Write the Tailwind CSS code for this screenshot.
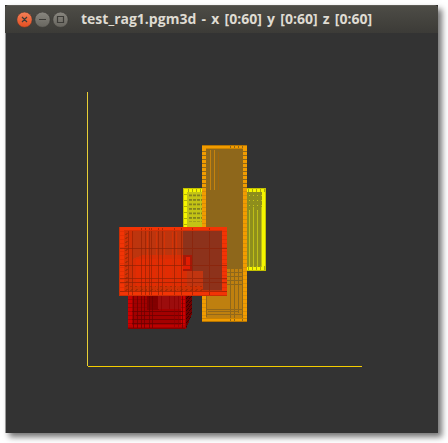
<!DOCTYPE html>
<html lang="en">
<head>
<meta charset="utf-8">
<title>test_rag1.pgm3d</title>
<script src="https://cdn.jsdelivr.net/npm/@tailwindcss/browser@4"></script>
</head>
<body class="bg-white w-[448px] h-[443px] overflow-hidden pt-[5px] pl-[5px]">
<main class="w-[433px] h-[428px] bg-[#333333] flex flex-col shadow-[4px_4px_6px_0px_rgba(0,0,0,0.55)]">
  <div class="bg-[#2b2a27] shrink-0">
  <header class="h-7 flex items-center pl-3 bg-linear-to-b from-[#4d4c46] to-[#3c3b37] border-t border-[#5d5b55] rounded-t-[4px]">
    <svg class="w-[52px] h-4 shrink-0" viewBox="0 0 52 16">
      <defs>
        <linearGradient id="close" x1="0" y1="0" x2="0" y2="1"><stop stop-color="#f68058"/><stop offset="1" stop-color="#e34e20"/></linearGradient>
        <linearGradient id="btn" x1="0" y1="0" x2="0" y2="1"><stop stop-color="#898780"/><stop offset="1" stop-color="#67655e"/></linearGradient>
      </defs>
      <g stroke="#34332f" stroke-width=".6">
        <circle cx="7.5" cy="7.7" r="7.7" fill="url(#close)"/>
        <circle cx="25.5" cy="7.7" r="7.7" fill="url(#btn)"/>
        <circle cx="43.5" cy="7.7" r="7.7" fill="url(#btn)"/>
      </g>
      <g stroke="#3c3b37" stroke-width="1.2" fill="none">
        <path d="M5 5L10 10M10 5L5 10M22 7.5H29M40.5 4.5H46.5V10.500H40.500Z"/>
      </g>
    </svg>
    <h1 class="ml-[12px] -mt-px font-['Open_Sans','Noto_Sans',sans-serif] font-bold text-[14px] leading-5 text-[#dfdbd2] whitespace-pre [word-spacing:1.6px]">test_rag1.pgm3d - x [0:60] y [0:60] z [0:60]</h1>
  </header>
  </div>
  <svg class="w-[433px] h-[400px] block border-l border-[#999999]" viewBox="6 33 432 400" shape-rendering="crispEdges">
    <defs>
      <pattern id="rows" width="4" height="4" patternUnits="userSpaceOnUse"><path d="M0 3.5H4" stroke="#8f681c"/></pattern>
      <pattern id="yrows" width="6" height="6" patternUnits="userSpaceOnUse"><path d="M0 2.5H6" stroke="#b5b500"/></pattern>
      <pattern id="ycols" x="185" width="4" height="4" patternUnits="userSpaceOnUse"><path d="M3.5 0V4" stroke="#a8a80c"/></pattern>
      <pattern id="dots" x="189" y="190" width="4" height="4.5" patternUnits="userSpaceOnUse"><path d="M0 1H2.5" stroke="#85831c" stroke-width="2"/></pattern>
      <pattern id="rrows" width="4" height="4" patternUnits="userSpaceOnUse"><path d="M0 3.5H4" stroke="#cf2800"/></pattern>
      <pattern id="drows" width="4" height="4" patternUnits="userSpaceOnUse"><path d="M0 3.5H4" stroke="#860000"/></pattern>
      <pattern id="speck" width="3" height="4" patternUnits="userSpaceOnUse"><path d="M0 3L3 0" stroke="#3f0000"/></pattern>
      <pattern id="rspeck" width="5" height="4" patternUnits="userSpaceOnUse"><path d="M0 3L3 1" stroke="#a82c05"/></pattern>
    </defs>

    <!-- axes -->
    <path d="M87.5 92V366" stroke="#e8cf35"/>
    <path d="M88 366.5H362" stroke="#f5cd00"/>

    <!-- yellow block -->
    <rect x="183" y="188" width="83" height="83" fill="#f5f500"/>
    <rect x="187" y="192" width="20" height="75" fill="#c3c315"/>
    <rect x="189" y="194" width="13" height="28" fill="url(#dots)"/>
    <rect x="247" y="192" width="15" height="75" fill="#8e8e1c"/>
    <path d="M249.5 211V267M253.5 207V267M257.5 211V267M261 207V267" stroke="#bdbd17"/>
    <path d="M249.5 195V211M253.5 195V207M257.5 195V211M261 195V207" stroke="#c5c517" stroke-dasharray="1 4"/>
    <rect x="183" y="192" width="4" height="36" fill="url(#yrows)"/>
    <rect x="187" y="188" width="15" height="4" fill="url(#ycols)"/>
    <rect x="247" y="188" width="19" height="4" fill="url(#ycols)"/>
    <rect x="247" y="266" width="19" height="4" fill="url(#ycols)"/>
    <path d="M183 188.5H266M265.5 188V271M247 270.5H266M183.5 188V228" stroke="#c4c200"/>

    <!-- orange block -->
    <rect x="202" y="145" width="45" height="177" fill="#f29c00"/>
    <rect x="206" y="149" width="37" height="120" fill="#8e671b"/>
    <rect x="206" y="269" width="37" height="50" fill="#bf800f"/>
    <path d="M210.5 150V190M214.5 150V190" stroke="#c7820c"/>
    <path d="M218.5 152V190" stroke="#a16509"/>
    <rect x="202" y="149" width="4" height="42" fill="url(#rows)"/>
    <rect x="243" y="149" width="4" height="42" fill="url(#rows)"/>
    <g fill="url(#rows)" opacity=".25"><rect x="202" y="191" width="4" height="128"/><rect x="243" y="191" width="4" height="128"/></g>
    <path d="M230.5 146V149M234.5 146V149M238.5 146V149M242.5 146V149" stroke="#8e671b"/>
    <path d="M230.5 269V321M234.5 269V321M238.5 269V313M242 269V321M227 272.5H243M227 276.5H243M227 280.5H243M227 284.5H243" stroke="#8e671b"/>
    <path d="M206 309.5H243M208 311.5H238M206 314.5H243M206.5 296V317" stroke="#93681a"/>
    <path d="M202 145.5H247M202 321.5H247" stroke="#b67400"/>
    <path d="M206 148.5H243M202 318.5H247" stroke="#cc8300"/>

    <!-- dark red block -->
    <path d="M185 290H192V314L186 329H185Z" fill="#700000"/>
    <path d="M185 290H192V314L186 329H185Z" fill="url(#speck)"/>
    <rect x="128" y="290" width="58" height="39" fill="#a30000"/>
    <rect x="128" y="290" width="4" height="39" fill="#cb0000"/>
    <rect x="181" y="290" width="4" height="39" fill="#d00000"/>
    <rect x="128" y="325" width="57" height="4" fill="#bd0000"/>
    <rect x="147" y="296" width="12" height="14" fill="#820000"/>
    <rect x="128" y="296" width="57" height="33" fill="url(#drows)" opacity=".5"/>
    <rect x="158" y="296" width="23" height="13" fill="#9c0d0d"/>
    <path d="M132 311.5H183M136 315.5H183M132 319.5H183M132 323.5H183" stroke="#6e0000" opacity=".8"/>
    <path d="M133.5 296V329M137.5 296V329M141.5 296V329M144.5 296V329M149.5 296V329M152.5 296V329M182.5 296V329" stroke="#690000" opacity=".7"/>
    <path d="M157.5 296V307M161.5 296V312M169.5 296V309M174.5 296V327M178.5 296V327" stroke="#870000" opacity=".6"/>
    <path d="M128 328.5H185" stroke="#850000"/>

    <!-- bright red block -->
    <rect x="119" y="227" width="108" height="69" fill="#f23405"/>
    <rect x="124" y="231" width="98" height="60" fill="#bd350e"/>
    <rect x="124" y="231" width="9" height="60" fill="#cf3006"/>
    <path d="M183 231H222V290H203V271H183Z" fill="#8d321b"/>
    <path d="M133 259L142 255H183V271H203V286H133Z" fill="#d82d05"/>
    <path d="M136 259H183V286H136Z" fill="#e22c03"/>
    <path d="M187 271H203V286H187Z" fill="#c13510"/>
    <path d="M183 255H192V271H183Z" fill="#a71706"/>
    <path d="M186 257H190V269H183V265H186Z" fill="#e11c02"/>
    <rect x="124" y="286" width="79" height="5" fill="#cf3104"/>
    <rect x="124" y="286" width="79" height="5" fill="url(#rspeck)"/>
    <rect x="124" y="231" width="4" height="56" fill="url(#rspeck)"/>
    <rect x="119" y="231" width="5" height="65" fill="url(#rrows)" opacity=".4"/>
    <rect x="222" y="231" width="5" height="65" fill="url(#rrows)" opacity=".4"/>
    <path d="M124 231V291M147 232V291M156 232V291M164.5 232V291M172.5 232V291M176.5 232V291" stroke="#d63205"/>
    <path d="M128.5 230V295M132.5 230V295M141.5 228V296M145.5 228V296M149.5 228V296M151.5 228V296M158.5 228V296M162.5 228V296M174.5 228V296M181.5 228V296" stroke="#912003" opacity=".65"/>
    <path d="M192.5 228V295M209.5 228V295M119 248.5H227M119 265.5H227M119 278.5H227M119 282.5H227M119 291.5H227" stroke="#8a2006" opacity=".65"/>
    <path d="M119 295.5H227M119.5 227V296" stroke="#cb2e04"/>
    <path d="M124 230.5H222" stroke="#d52f05"/>
  </svg>
</main>
</body>
</html>
